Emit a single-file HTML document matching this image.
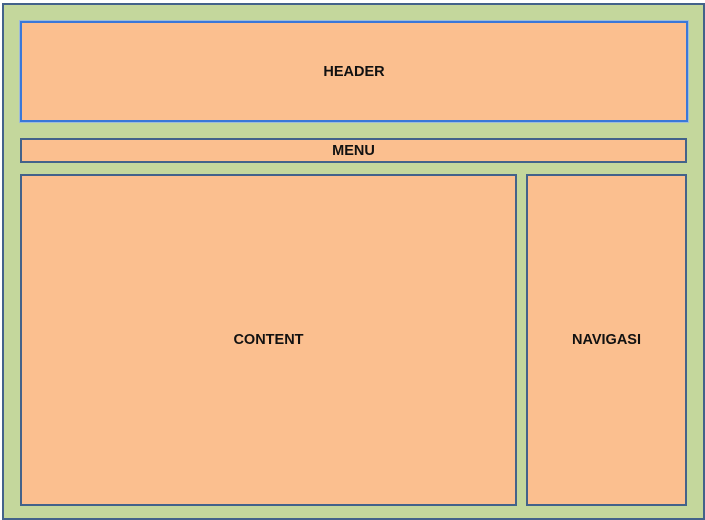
<!DOCTYPE html>
<html><head><style>
body{margin:0;width:705px;height:520px;background:#fff;position:relative;font-family:"Liberation Sans",sans-serif;overflow:hidden}
.b{position:absolute;box-sizing:border-box;background:#fbbf8f;border:2px solid #43628a;display:flex;align-items:center;justify-content:center;font-weight:bold;font-size:14.5px;color:#111}
</style></head><body>
<div class="b" style="left:2px;top:3px;width:703px;height:517px;background:#c4d79c;border-color:#43628a"></div>
<div class="b" style="left:20px;top:21px;width:668px;height:101px;border:2px solid #3a78d8;box-shadow:0 0 0 1px #9fbcd8">HEADER</div>
<div class="b" style="left:20px;top:138px;width:667px;height:25px">MENU</div>
<div class="b" style="left:20px;top:174px;width:497px;height:332px">CONTENT</div>
<div class="b" style="left:526px;top:174px;width:161px;height:332px">NAVIGASI</div>
</body></html>
